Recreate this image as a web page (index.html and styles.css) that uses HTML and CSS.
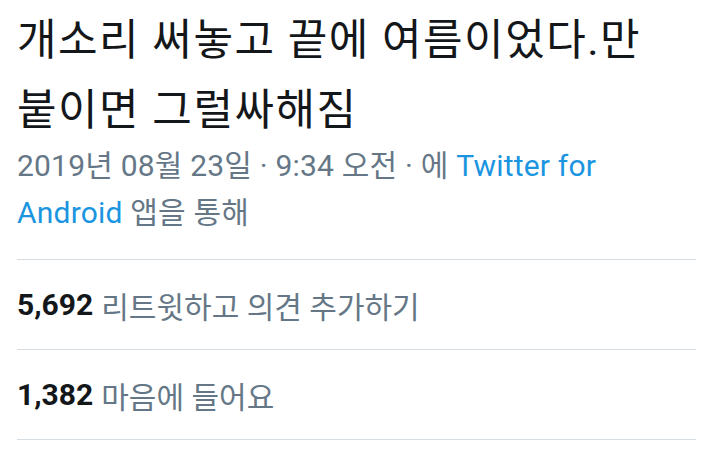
FILE: index.html
```html
<!DOCTYPE html>
<html lang="ko">
<head>
<meta charset="utf-8">
<link rel="stylesheet" href="styles.css">
</head>
<body>
<div class="tweet">
  <div class="head">
    <p class="text">개소리 써놓고 끝에 여름이었다.만 붙이면 그럴싸해짐</p>
    <p class="meta">2019년 08월 23일 · 9:34 오전 · 에 <span class="link">Twitter for</span> <span class="link">Android</span> 앱을 통해</p>
  </div>
  <div class="stat"><b>5,692</b> 리트윗하고 의견 추가하기</div>
  <div class="stat"><b>1,382</b> 마음에 들어요</div>
</div>
</body>
</html>
```

FILE: styles.css
```css
html, body {
  margin: 0;
  padding: 0;
  background: #ffffff;
}
.tweet {
  padding: 5px 13px 0 17px;
  font-family: Roboto, "Noto Sans CJK KR", sans-serif;
}
.head {
  padding-bottom: 23px;
  border-bottom: 1px solid #d5dde3;
}
.text {
  margin: 0;
  width: 660px;
  font-size: 43px;
  letter-spacing: 1.5px;
  line-height: 70px;
  color: #14171a;
}
.meta {
  margin: -3px 0 0 0;
  width: 620px;
  font-size: 30px;
  letter-spacing: 0.2px;
  line-height: 47px;
  color: #657786;
}
.link {
  color: #1b95e0;
}
.stat {
  height: 89px;
  display: flex;
  align-items: center;
  gap: 8px;
  font-size: 30px;
  color: #657786;
  border-bottom: 1px solid #d5dde3;
}
.stat b {
  color: #14171a;
  font-weight: 700;
}
```
